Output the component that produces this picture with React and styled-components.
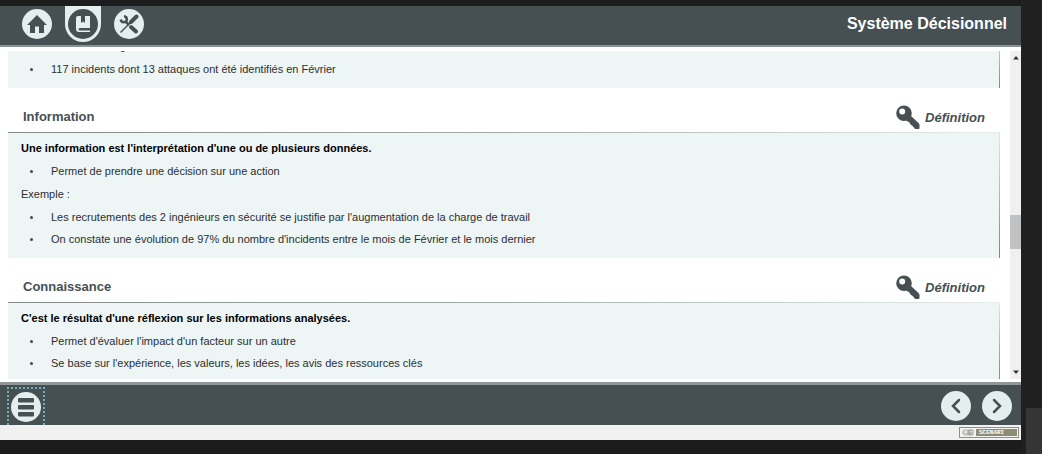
import React from "react";
import styled, { createGlobalStyle, css } from "styled-components";

const slate = "#465053";
const pale = "#e4eeef";
const panel = "#eef5f5";

const GlobalStyle = createGlobalStyle`
  * { box-sizing: border-box; }
  body {
    margin: 0;
    background: #1c1c1c;
    font-family: "Liberation Sans", Arial, sans-serif;
    font-size: 11px;
    color: #2b2f31;
  }
`;

const Screen = styled.div`
  display: flex;
  height: 100vh;
  padding: 6px 0 14px;
`;

const Page = styled.div`
  flex: 1;
  min-width: 0;
  display: flex;
  flex-direction: column;
  background: #fff;
`;

const Side = styled.aside`
  width: 21px;
  display: flex;
  flex-direction: column;
  justify-content: flex-end;
  align-items: flex-end;
  margin: -6px 0 -14px;
  background: #202021;
`;

const SideBlock = styled.div`
  width: 16px;
  height: 46px;
  background: #353535;
`;

const Header = styled.header`
  flex: none;
  display: flex;
  align-items: flex-start;
  justify-content: space-between;
  height: 41px;
  padding: 0 14px 0 19px;
  background: ${slate};
  border-bottom: 2px solid #8b9091;
`;

const Nav = styled.nav`
  display: flex;
  gap: 10px;
`;

const Tab = styled.a`
  display: flex;
  align-items: flex-end;
  justify-content: center;
  width: 36px;
  height: 36px;
  padding-bottom: 3px;
  border-radius: 0 0 18px 18px;
  background: ${(p) => (p.$active ? pale : "transparent")};
`;

const Disc = styled.span`
  display: flex;
  align-items: center;
  justify-content: center;
  width: 30px;
  height: 30px;
  border-radius: 50%;
  background: ${(p) => (p.$dark ? slate : pale)};
  color: ${(p) => (p.$dark ? pale : slate)};
`;

const Title = styled.h1`
  margin: 0;
  font-size: 16px;
  line-height: 36px;
  color: #fff;
`;

const Viewport = styled.div`
  flex: 1;
  min-height: 0;
  display: flex;
  margin: 4px 0 3px;
`;

const Content = styled.main`
  flex: 1;
  min-width: 0;
  overflow: hidden;
  padding-left: 8px;
`;

const Section = styled.section`
  ${(p) => p.$scrolled && css`margin-top: -20px;`}
`;

const SectionHead = styled.div`
  display: flex;
  justify-content: space-between;
  padding: 14px 15px 0;
  line-height: 30px;
  height: 45px;
  background: linear-gradient(to right, #858b8d, #a5aaab 50%, #e8eeef) bottom / 100% 1px no-repeat;
`;

const Heading = styled.h2`
  margin: 0;
  font-size: 13px;
  color: ${slate};
`;

const Kind = styled.span`
  display: flex;
  align-items: center;
  gap: 5px;
  font-size: 13px;
  font-weight: bold;
  font-style: italic;
  color: ${slate};
`;

const Body = styled.div`
  padding: 4px 13px 8px;
  background:
    linear-gradient(to bottom, #dfe6e7, #7d8587) right / 1px 100% no-repeat,
    ${panel};
`;

const Para = styled.p`
  margin: 0 0 1px;
  line-height: 22px;
  ${(p) => p.$strong && css`font-weight: bold; color: #000;`}
`;

const List = styled.ul`
  margin: 0 0 1px;
  padding: 0;
  list-style: none;
  &:last-child { margin-bottom: 0; }
`;

const Item = styled.li`
  display: flex;
  align-items: center;
  line-height: 22px;
  &::before {
    content: "";
    width: 3px;
    height: 3px;
    margin: 1px 18px 0 9px;
    border-radius: 50%;
    background: #43494b;
  }
`;

const Scrollbar = styled.div`
  width: 11px;
  margin-left: 10px;
  display: flex;
  flex-direction: column;
  background: #f0f0f1;
`;

const ScrollArrow = styled.button`
  display: flex;
  align-items: center;
  justify-content: center;
  height: 14px;
  padding: 0;
  border: 0;
  background: none;
  color: #303436;
`;

const Track = styled.div`
  flex: 1;
  display: flex;
  flex-direction: column;
`;

const Before = styled.div`
  flex: 150;
`;

const Thumb = styled.div`
  flex: 34;
  background: #bfc1c2;
`;

const After = styled.div`
  flex: 116;
`;

const Footer = styled.footer`
  flex: none;
  display: flex;
  align-items: center;
  justify-content: space-between;
  height: 43px;
  padding: 2px 9px 0 7px;
  background: ${slate};
  border-top: 3px solid #929799;
`;

const Pager = styled.div`
  display: flex;
  gap: 11px;
`;

const RoundButton = styled.button`
  display: flex;
  align-items: center;
  justify-content: center;
  padding: 0;
  border: 0;
  background: none;
  ${(p) => p.$focused && css`
    width: 38px;
    height: 38px;
    border: 2px dotted #6fb0b8;
    border-bottom: 0;
  `}
`;

const Credits = styled.div`
  flex: none;
  display: flex;
  align-items: center;
  justify-content: flex-end;
  height: 15px;
  padding-right: 2px;
  background: #f1f1f1;
`;

const Badge = styled.a`
  display: flex;
  align-items: stretch;
  width: 60px;
  height: 11px;
  padding: 1px;
  border: 1px solid #8f917f;
  background: #f4f4f1;
  text-decoration: none;
`;

const BadgeName = styled.span`
  flex: 1;
  padding-left: 3px;
  font-family: "Liberation Mono", monospace;
  font-size: 6px;
  font-weight: bold;
  line-height: 7px;
  color: #fff;
  background: #8b8d78;
`;

const HomeIcon = () => (
  <svg width="20" height="20" viewBox="0 0 20 20" fill="currentColor" aria-hidden="true">
    <path d="M10 1 20 11H17V19H12V12.500H8V19H3V11H0Z" />
  </svg>
);

const BookIcon = () => (
  <svg width="18" height="20" viewBox="0 0 18 20" aria-hidden="true">
    <path fill="currentColor" d="M4 2H7V9L9 7.500 11 9V2H16V14H5.500A1.300 1.300 0 0 0 5.500 16.500H16V18H5A3 3 0 0 1 2 15V4A2 2 0 0 1 4 2Z" />
  </svg>
);

const ToolsIcon = () => (
  <svg width="20" height="20" viewBox="0 0 20 20" fill="none" stroke="currentColor" aria-hidden="true">
    <path d="M1.500 18.500 11.500 8.500" strokeWidth="1.500" />
    <path d="M12 8 17.500 2.500" strokeWidth="4" strokeLinecap="round" />
    <path d="M6 7 10 11" strokeWidth="2.500" />
    <path d="M12 13 17 17.500" strokeWidth="4" strokeLinecap="round" />
    <path d="M5 2.200A3 3 0 1 1 1.800 5.500" strokeWidth="2.500" />
  </svg>
);

const KeyIcon = () => (
  <svg width="24" height="26" viewBox="0 0 24 26" aria-hidden="true">
    <path
      fill={slate}
      fillRule="evenodd"
      d="M8 .500A7.800 7.800 0 1 1 8 16.100 7.800 7.800 0 1 1 8 .500ZM6.200 3.600A3 3 0 1 0 6.200 9.600 3 3 0 1 0 6.200 3.600Z"
    />
    <path fill={slate} d="M10 15.500 15 11 22.500 18Q23.500 19 23.500 20V23Q23.500 24 22.500 24H20Q18.500 24 18 22.500L16 20.500 14.500 19.500 13.500 17.500Z" />
  </svg>
);

const MenuIcon = () => (
  <svg width="18" height="20" viewBox="0 0 18 20" fill="currentColor" aria-hidden="true">
    <rect x="1" y="1" width="16" height="4.500" rx="1" />
    <rect x="1" y="8" width="16" height="4.500" rx="1" />
    <rect x="1" y="15" width="16" height="4.500" rx="1" />
  </svg>
);

const Chevron = ({ d }) => (
  <svg width="16" height="18" viewBox="0 0 16 18" fill="none" stroke="currentColor" strokeWidth="2.500" strokeLinecap="round" aria-hidden="true">
    <path d={d} />
  </svg>
);

const Arrow = ({ d }) => (
  <svg width="6" height="4" viewBox="0 0 6 4" fill="currentColor" aria-hidden="true">
    <path d={d} />
  </svg>
);

const BadgeMark = () => (
  <svg width="15" height="7" viewBox="0 0 15 7" aria-hidden="true">
    <ellipse cx="5" cy="3.500" rx="4" ry="3.300" fill="#c4c4c4" />
    <ellipse cx="9.500" cy="3.500" rx="3.500" ry="3.300" fill="#aaa" />
    <ellipse cx="5" cy="3" rx="1.500" ry="1.200" fill="#e8e8e8" />
    <path d="M9 2.500H12M10 4H13" stroke="#ddd" />
  </svg>
);

const Definition = ({ title, children }) => (
  <Section>
    <SectionHead>
      <Heading>{title}</Heading>
      <Kind><KeyIcon />Définition</Kind>
    </SectionHead>
    <Body>{children}</Body>
  </Section>
);

const Bullets = ({ items }) => (
  <List>{items.map((t) => <Item key={t}>{t}</Item>)}</List>
);

export default function App() {
  return (
    <Screen>
      <GlobalStyle />
      <Page>
        <Header>
          <Nav>
            <Tab href="#accueil" aria-label="Accueil"><Disc><HomeIcon /></Disc></Tab>
            <Tab href="#module" aria-label="Module" $active><Disc $dark><BookIcon /></Disc></Tab>
            <Tab href="#outils" aria-label="Outils"><Disc><ToolsIcon /></Disc></Tab>
          </Nav>
          <Title>Système Décisionnel</Title>
        </Header>
        <Viewport>
          <Content>
            <Section $scrolled>
              <Body>
                <Bullets items={["Recruter 12 ingénieurs"]} />
                <Bullets items={["117 incidents dont 13 attaques ont été identifiés en Février"]} />
              </Body>
            </Section>
            <Definition title="Information">
              <Para $strong>Une information est l'interprétation d'une ou de plusieurs données.</Para>
              <Bullets items={["Permet de prendre une décision sur une action"]} />
              <Para>Exemple :</Para>
              <Bullets
                items={[
                  "Les recrutements des 2 ingénieurs en sécurité se justifie par l'augmentation de la charge de travail",
                  "On constate une évolution de 97% du nombre d'incidents entre le mois de Février et le mois dernier",
                ]}
              />
            </Definition>
            <Definition title="Connaissance">
              <Para $strong>C'est le résultat d'une réflexion sur les informations analysées.</Para>
              <Bullets
                items={[
                  "Permet d'évaluer l'impact d'un facteur sur un autre",
                  "Se base sur l'expérience, les valeurs, les idées, les avis des ressources clés",
                ]}
              />
            </Definition>
          </Content>
          <Scrollbar>
            <ScrollArrow aria-label="Défiler vers le haut"><Arrow d="M3 0 6 3.500H0Z" /></ScrollArrow>
            <Track><Before /><Thumb /><After /></Track>
            <ScrollArrow aria-label="Défiler vers le bas"><Arrow d="M0 .500H6L3 4Z" /></ScrollArrow>
          </Scrollbar>
        </Viewport>
        <Footer>
          <RoundButton aria-label="Menu" $focused><Disc><MenuIcon /></Disc></RoundButton>
          <Pager>
            <RoundButton aria-label="Précédent"><Disc><Chevron d="M11 3 5 9 11 15" /></Disc></RoundButton>
            <RoundButton aria-label="Suivant"><Disc><Chevron d="M5 3 11 9 5 15" /></Disc></RoundButton>
          </Pager>
        </Footer>
        <Credits>
          <Badge href="#scenari"><BadgeMark /><BadgeName>SCENARI</BadgeName></Badge>
        </Credits>
      </Page>
      <Side><SideBlock /></Side>
    </Screen>
  );
}
